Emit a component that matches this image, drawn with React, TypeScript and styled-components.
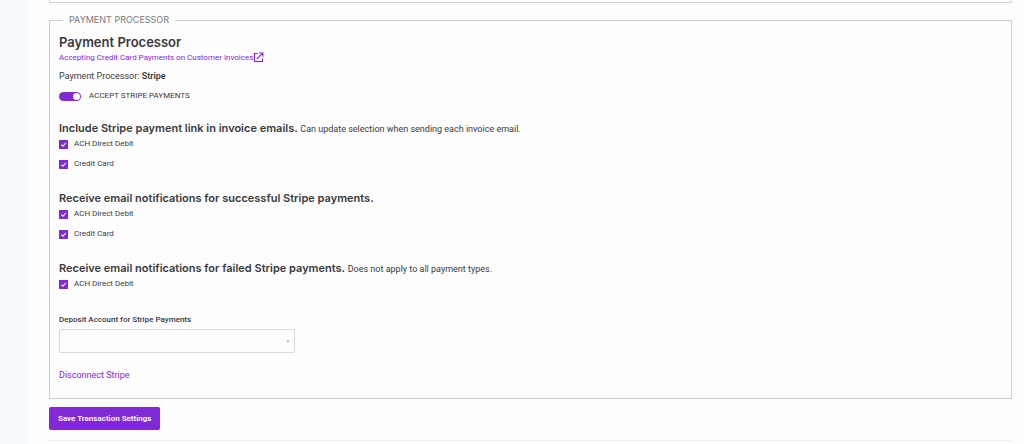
import React from "react";
import styled, { createGlobalStyle } from "styled-components";

const purple = "#8129d4";
const text = "#3a3a3c";
const display = `Inter, "Liberation Sans", sans-serif`;
const body = `Roboto, "Liberation Sans", sans-serif`;

const GlobalStyle = createGlobalStyle`
  *, *::before, *::after { box-sizing: border-box; }
  body {
    margin: 0;
    background: #fdfdfd;
    color: ${text};
    font-family: ${body};
    font-size: 8px;
    line-height: 12px;
  }
`;

const Page = styled.div`
  display: flex;
  min-height: 100vh;
`;

const Rail = styled.aside`
  flex: 0 0 28px;
  background: #f6fafc;
  border-right: 1px solid #f3f5f6;
`;

const Main = styled.main`
  flex: 1;
  min-width: 0;
  padding: 0 12px 0 21px;
`;

const PreviousPanel = styled.div`
  height: 3px;
  border: 1px solid #d3d3d7;
  border-top: 0;
`;

const Panel = styled.fieldset`
  min-width: 0;
  margin: 11px 0 8px;
  padding: 6px 9px 17px;
  border: 1px solid #cdcdcf;
`;

const Legend = styled.legend`
  margin-left: 4px;
  padding: 0 6px;
  color: #7b7b7e;
  font-family: ${display};
  font-size: 9px;
`;

const Title = styled.h2`
  margin: 0;
  font-family: ${display};
  font-size: 13px;
  font-weight: 600;
  line-height: 20px;
`;

const TextLink = styled.a`
  display: flex;
  align-items: center;
  width: fit-content;
  color: ${purple};
  text-decoration: none;
`;

const Processor = styled.p`
  margin: 6px 0 8px;
  font-size: 9px;
`;

const Strong = styled.strong`
  font-weight: 600;
`;

const Row = styled.label<{ $gap: number }>`
  display: flex;
  align-items: center;
  gap: ${(p) => p.$gap}px;
  width: fit-content;
`;

const Switch = styled.input`
  appearance: none;
  display: flex;
  align-items: center;
  justify-content: flex-start;
  width: 22px;
  height: 9px;
  margin: 1px 0 0;
  padding: 0 1px;
  border-radius: 5px;
  background: #b5b5ba;
  &::before {
    content: "";
    width: 7px;
    height: 7px;
    border-radius: 50%;
    background: #fff;
  }
  &:checked {
    justify-content: flex-end;
    background: ${purple};
  }
`;

const Groups = styled.div`
  display: flex;
  flex-direction: column;
  gap: 20px;
  margin-top: 18px;
`;

const Heading = styled.h3`
  margin: 0 0 2px;
  font-family: ${display};
  font-size: 11px;
  font-weight: 600;
  line-height: 16px;
`;

const Note = styled.span`
  font-family: ${body};
  font-size: 9px;
  font-weight: 400;
  line-height: 12px;
`;

const Checks = styled.div`
  display: flex;
  flex-direction: column;
  gap: 8px;
`;

const Box = styled.span`
  display: grid;
  width: 9px;
  height: 9px;
  > * { grid-area: 1 / 1; }
  > svg { pointer-events: none; }
`;

const Tick = styled.input`
  appearance: none;
  width: 9px;
  height: 9px;
  margin: 0;
  border: 1px solid ${purple};
  &:checked { background: ${purple}; }
  &:not(:checked) + svg { visibility: hidden; }
`;

const Field = styled.div`
  display: flex;
  flex-direction: column;
  gap: 3px;
  margin: 24px 0 16px;
`;

const FieldLabel = styled.label`
  font-weight: 500;
`;

const SelectBox = styled.div`
  display: grid;
  align-items: center;
  width: 100%;
  max-width: 236px;
  > * { grid-area: 1 / 1; }
  > svg { justify-self: end; margin-right: 5px; pointer-events: none; }
`;

const Select = styled.select`
  appearance: none;
  width: 100%;
  height: 24px;
  padding: 0 16px 0 8px;
  border: 1px solid #d9d9dc;
  border-radius: 2px;
  background: #fefefe;
  color: ${text};
  font: inherit;
`;

const Disconnect = styled(TextLink)`
  font-size: 9px;
`;

const Save = styled.button`
  display: block;
  height: 23px;
  padding: 0 9px;
  border: 0;
  border-radius: 2px;
  background: ${purple};
  color: #fff;
  font: 600 8px/12px ${body};
`;

const Divider = styled.hr`
  height: 1px;
  margin: 10px 0 0;
  border: 0;
  background: #f0f1f2;
`;

function Check({ label }: { label: string }) {
  return (
    <Row $gap={6}>
      <Box>
        <Tick type="checkbox" defaultChecked />
        <svg width="9" height="9" viewBox="0 0 9 9" fill="none" stroke="#fff" strokeWidth="1.1">
          <path d="M2.4 4.6 4 6.1 6.7 3" />
        </svg>
      </Box>
      {label}
    </Row>
  );
}

function Group({ title, note, items }: { title: string; note?: string; items: string[] }) {
  return (
    <section>
      <Heading>
        {title} {note && <Note>{note}</Note>}
      </Heading>
      <Checks>
        {items.map((item) => (
          <Check key={item} label={item} />
        ))}
      </Checks>
    </section>
  );
}

export default function App() {
  return (
    <Page>
      <GlobalStyle />
      <Rail />
      <Main>
        <PreviousPanel />
        <Panel>
          <Legend>PAYMENT PROCESSOR</Legend>
          <Title>Payment Processor</Title>
          <TextLink href="#help">
            Accepting Credit Card Payments on Customer Invoices
            <svg width="11" height="12" viewBox="0 0 11 12" fill="none" stroke={purple} strokeWidth="1.1">
              <path d="M4.5 1.5h-3v8h8V6.2M6.2 1h3.7v3.7M9.8 1.1 4 6.9" />
            </svg>
          </TextLink>
          <Processor>
            Payment Processor: <Strong>Stripe</Strong>
          </Processor>
          <Row $gap={8}>
            <Switch type="checkbox" role="switch" defaultChecked />
            ACCEPT STRIPE PAYMENTS
          </Row>
          <Groups>
            <Group
              title="Include Stripe payment link in invoice emails."
              note="Can update selection when sending each invoice email."
              items={["ACH Direct Debit", "Credit Card"]}
            />
            <Group
              title="Receive email notifications for successful Stripe payments."
              items={["ACH Direct Debit", "Credit Card"]}
            />
            <Group
              title="Receive email notifications for failed Stripe payments."
              note="Does not apply to all payment types."
              items={["ACH Direct Debit"]}
            />
          </Groups>
          <Field>
            <FieldLabel htmlFor="deposit">Deposit Account for Stripe Payments</FieldLabel>
            <SelectBox>
              <Select id="deposit">
                <option value=""></option>
              </Select>
              <svg width="4" height="4" viewBox="0 0 4 4" fill="#77777b">
                <path d="M.8 2.8 2 1l1.2 1.8z" />
              </svg>
            </SelectBox>
          </Field>
          <Disconnect href="#disconnect">Disconnect Stripe</Disconnect>
        </Panel>
        <Save type="button">Save Transaction Settings</Save>
        <Divider />
      </Main>
    </Page>
  );
}
